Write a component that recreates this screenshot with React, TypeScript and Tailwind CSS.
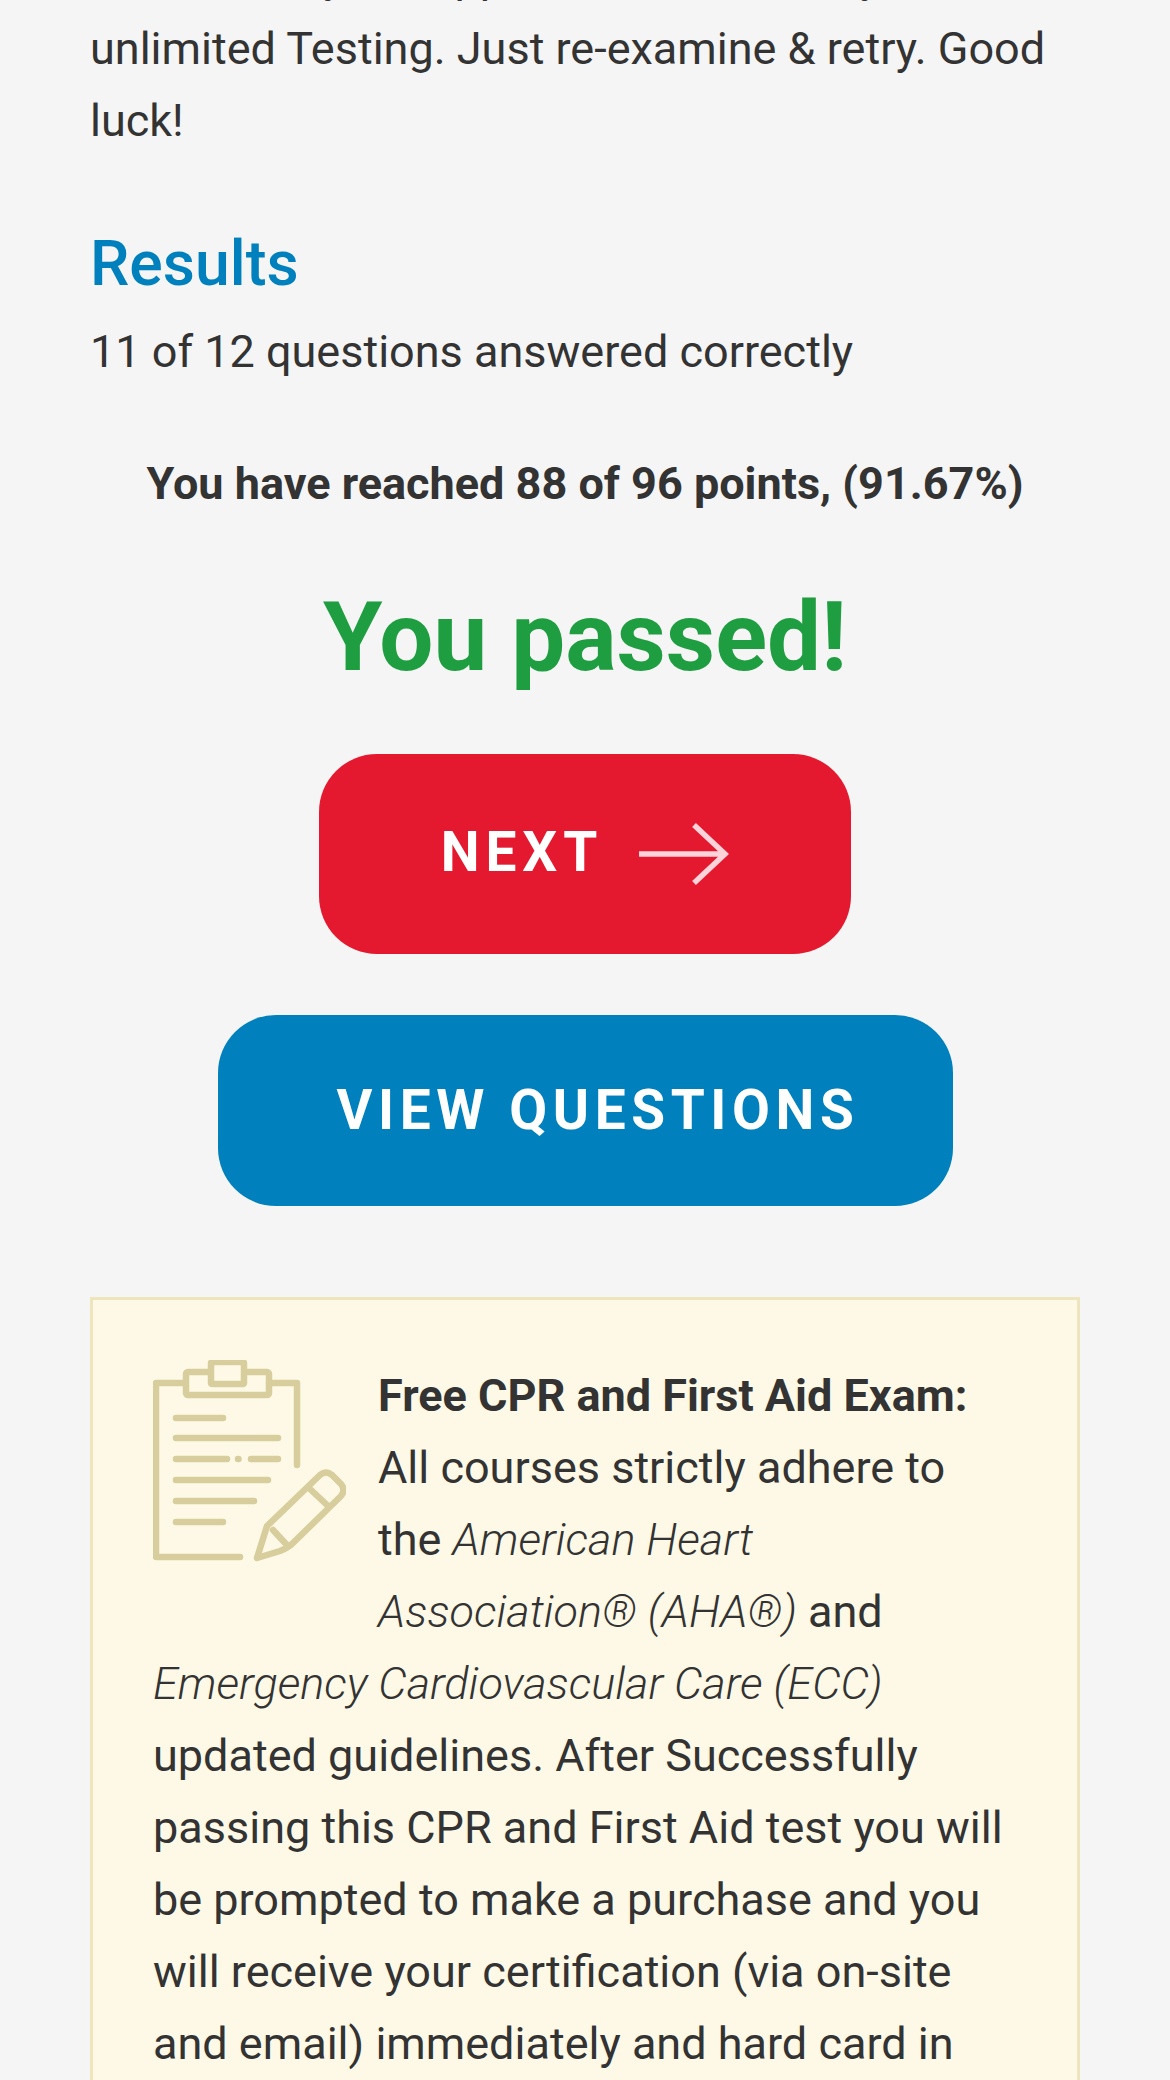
const ClipboardIcon = () => (
  <svg viewBox="23 20 193 203" className="float-left mr-[32px] mb-[24px] h-[203px] w-[193px] text-[#d8cd9c]" fill="none" stroke="currentColor" strokeWidth="6.5" strokeLinecap="round" strokeLinejoin="round">
    <path d="M55 43H26V217H110M139 43H167V125" />
    <rect x="56" y="32" width="83" height="23" rx="2" />
    <rect x="81" y="22" width="33" height="22" rx="1" fill="#fef9e6" />
    <path d="M46 78H93M46 98H148M46 119H97M108 119H108.5M121 119H148M46 140H138M46 161H124M46 182H93" />
    <path d="M127 218L137 186L190 135Q196 130 202 135L211 144Q216 150 211 156L163 203Q158 208 150 211Z" />
    <path d="M180 149L197 165M143 190L156 204" />
  </svg>
);

const App = () => {
  return (
    <main className="h-[2080px] overflow-hidden bg-[#f5f5f5] px-[90px] font-['Roboto',sans-serif] text-[#333333]">
      <p className="mt-[-59px] text-[45px] leading-[72px]">
        Do not worry! It happens to all of us! Try for unlimited Testing. Just re-examine &amp; retry. Good luck!
      </p>

      <h3 className="mt-[71px] text-[62.5px] font-medium leading-[72px] text-[#0080bc]">Results</h3>
      <p className="mt-[16px] text-[45px] leading-[72px]">11 of 12 questions answered correctly</p>

      <p className="mt-[60px] text-center text-[45px] font-bold leading-[72px]">
        You have reached 88 of 96 points, (91.67%)
      </p>

      <h2 className="mt-[57px] text-center text-[96px] font-bold leading-[120px] text-[#1f9e41]">You passed!</h2>

      <div className="mt-[57px] flex flex-col items-center">
        <button className="flex h-[200px] w-[532px] items-center justify-center gap-[36px] rounded-[58px] bg-[#e4192f] text-[55px] font-bold tracking-[6px] text-white">
          <span className="mt-[-3px]">NEXT</span>
          <svg viewBox="0 0 90 62" className="h-[62px] w-[90px]" fill="none" stroke="#ffd3d9" strokeWidth="5.5">
            <path d="M0 31H85M55 2L86 31L55 60" />
          </svg>
        </button>
        <button className="mt-[61px] flex h-[191px] w-[735px] items-center justify-center rounded-[58px] bg-[#0080bc] pl-[26px] text-[55px] font-bold tracking-[5.6px] text-white">
          VIEW QUESTIONS
        </button>
      </div>

      <section className="mt-[91px] border-[3px] border-[#efe5bd] bg-[#fef9e6] px-[60px] pt-[60px] pb-[80px] text-[45px] leading-[72px]">
        <ClipboardIcon />
        <p>
          <strong className="font-bold">Free CPR and First Aid Exam:</strong> All courses strictly adhere to the{" "}
          <em className="font-light">American Heart Association® (AHA®)</em> and{" "}
          <em className="font-light">Emergency Cardiovascular Care (ECC)</em> updated guidelines. After Successfully
          passing this CPR and First Aid test you will be prompted to make a purchase and you will receive your
          certification (via on-site and email) immediately and hard card in the mail.
        </p>
      </section>
    </main>
  );
};

export default App;
